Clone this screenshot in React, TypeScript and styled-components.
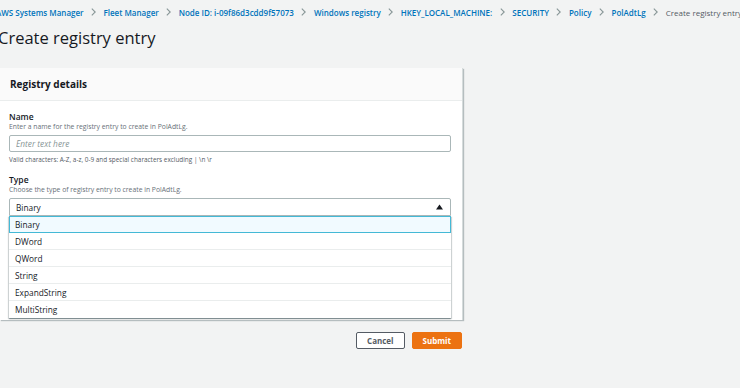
import React from "react";
import styled, { createGlobalStyle } from "styled-components";

const GlobalStyle = createGlobalStyle`
  html, body {
    margin: 0;
    padding: 0;
    background: #f2f3f3;
    font-family: "Open Sans", "Noto Sans", Arial, sans-serif;
    color: #16191f;
    overflow: hidden;
  }
`;

const Page = styled.div`
  width: 740px;
  height: 388px;
  overflow: hidden;
  box-sizing: border-box;
  padding-top: 5px;
`;

const Crumbs = styled.nav`
  display: flex;
  align-items: center;
  gap: 7.5px;
  height: 14px;
  margin-left: -4px;
  white-space: nowrap;
  font-size: 8px;
`;

const Crumb = styled.span<{ $current?: boolean }>`
  color: ${(p) => (p.$current ? "#545b64" : "#0073bb")};
  font-weight: ${(p) => (p.$current ? 400 : 600)};
`;

const Title = styled.h1`
  margin: 8px 0 0 -2px;
  font-size: 16.5px;
  font-weight: 400;
  line-height: 22px;
  color: #16191f;
`;

const Main = styled.div`
  width: 463px;
  margin-top: 19px;
`;

const Panel = styled.section`
  background: #fff;
  box-shadow: 1px 1px 1px rgba(0, 28, 36, 0.25);
  border-right: 1px solid #d5dbdb;
  box-sizing: border-box;
`;

const PanelHeader = styled.header`
  height: 33px;
  box-sizing: border-box;
  background: #fafafa;
  border-bottom: 1px solid #eaeded;
  display: flex;
  align-items: center;
  padding-left: 10px;
  font-size: 10px;
  font-weight: 700;
`;

const PanelBody = styled.div`
  padding: 10px 11px 0 9px;
  height: 219px;
  box-sizing: border-box;
`;

const Field = styled.div`
  margin-bottom: 10px;
`;

const Label = styled.div`
  font-size: 8.5px;
  font-weight: 600;
  line-height: 11px;
  color: #16191f;
`;

const Description = styled.div`
  font-size: 6.8px;
  line-height: 9px;
  color: #687078;
  margin-bottom: 4px;
`;

const Hint = styled.div`
  font-size: 6.4px;
  line-height: 9px;
  color: #545b64;
  margin-top: 3px;
`;

const Input = styled.input`
  display: block;
  width: 100%;
  height: 17px;
  box-sizing: border-box;
  border: 1px solid #aab7b8;
  border-radius: 2px;
  padding: 0 6px;
  font-family: inherit;
  font-size: 8.3px;
  &::placeholder {
    color: #879596;
    font-style: italic;
  }
`;

const SelectWrap = styled.div`
  position: relative;
`;

const SelectBox = styled.div`
  height: 18px;
  box-sizing: border-box;
  border: 1px solid #aab7b8;
  border-radius: 2px 2px 0 0;
  display: flex;
  align-items: center;
  justify-content: space-between;
  padding: 0 7px 0 6px;
  font-size: 8.3px;
`;

const Options = styled.ul`
  position: absolute;
  left: 0;
  right: 0;
  top: 18px;
  margin: 0;
  padding: 0;
  list-style: none;
  background: #fff;
  box-shadow: 0 1px 1px 0 rgba(0, 28, 36, 0.3), 1px 1px 1px 0 rgba(0, 28, 36, 0.15),
    -1px 1px 1px 0 rgba(0, 28, 36, 0.15);
  z-index: 2;
`;

const Option = styled.li<{ $active?: boolean }>`
  height: 17px;
  box-sizing: border-box;
  display: flex;
  align-items: center;
  padding-left: 6px;
  font-size: 8.3px;
  color: #16191f;
  border-bottom: 1px solid #eaeded;
  ${(p) =>
    p.$active &&
    `
    background: #f1faff;
    border: 1px solid #44b9d6;
    padding-left: 5px;
  `}
  &:last-child {
    border-bottom: none;
  }
`;

const Actions = styled.div`
  display: flex;
  justify-content: flex-end;
  gap: 7px;
  margin-top: 12px;
  padding-right: 1px;
`;

const Button = styled.button<{ $primary?: boolean }>`
  height: 17px;
  box-sizing: border-box;
  padding: 0 10px;
  border-radius: 2px;
  font-family: inherit;
  font-size: 8px;
  font-weight: 700;
  border: 1px solid ${(p) => (p.$primary ? "#ec7211" : "#545b64")};
  background: ${(p) => (p.$primary ? "#ec7211" : "#fff")};
  color: ${(p) => (p.$primary ? "#fff" : "#545b64")};
`;

const Chevron = () => (
  <svg width="5" height="8" viewBox="0 0 5 8" style={{ flex: "none" }}>
    <polyline points="0.8,0.6 4.2,4 0.8,7.4" fill="none" stroke="#879596" strokeWidth="1.1" />
  </svg>
);

const Caret = () => (
  <svg width="7" height="6" viewBox="0 0 7 6">
    <polygon points="3.5,0.5 7,5.5 0,5.5" fill="#16191f" />
  </svg>
);

const crumbs = [
  "AWS Systems Manager",
  "Fleet Manager",
  "Node ID: i-09f86d3cdd9f57073",
  "Windows registry",
  "HKEY_LOCAL_MACHINE:",
  "SECURITY",
  "Policy",
  "PolAdtLg",
];

const types = ["Binary", "DWord", "QWord", "String", "ExpandString", "MultiString"];

export default function App() {
  return (
    <Page>
      <GlobalStyle />
      <Crumbs>
        {crumbs.map((c) => (
          <React.Fragment key={c}>
            <Crumb>{c}</Crumb>
            <Chevron />
          </React.Fragment>
        ))}
        <Crumb $current>Create registry entry</Crumb>
      </Crumbs>
      <Title>Create registry entry</Title>
      <Main>
        <Panel>
          <PanelHeader>Registry details</PanelHeader>
          <PanelBody>
            <Field>
              <Label>Name</Label>
              <Description>Enter a name for the registry entry to create in PolAdtLg.</Description>
              <Input placeholder="Enter text here" />
              <Hint>Valid characters: A-Z, a-z, 0-9 and special characters excluding | \n \r</Hint>
            </Field>
            <Field>
              <Label>Type</Label>
              <Description>Choose the type of registry entry to create in PolAdtLg.</Description>
              <SelectWrap>
                <SelectBox>
                  <span>Binary</span>
                  <Caret />
                </SelectBox>
                <Options>
                  {types.map((t, i) => (
                    <Option key={t} $active={i === 0}>
                      {t}
                    </Option>
                  ))}
                </Options>
              </SelectWrap>
            </Field>
          </PanelBody>
        </Panel>
        <Actions>
          <Button>Cancel</Button>
          <Button $primary>Submit</Button>
        </Actions>
      </Main>
    </Page>
  );
}
